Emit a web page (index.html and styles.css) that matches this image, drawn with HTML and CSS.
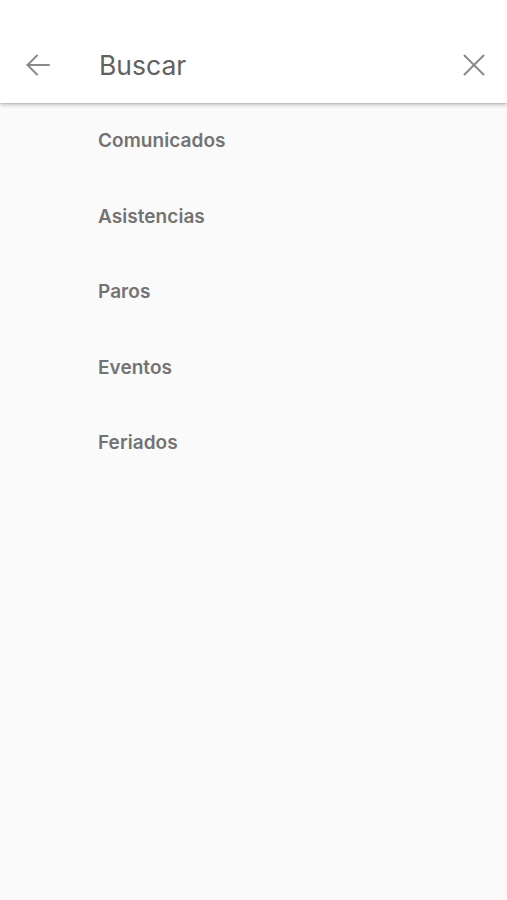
FILE: index.html
```html
<!DOCTYPE html>
<html lang="es">
<head>
<meta charset="utf-8">
<link rel="stylesheet" href="styles.css">
</head>
<body>
<header class="bar">
  <button class="icon-btn back" aria-label="Atrás">
    <svg width="26" height="24" viewBox="0 0 26 24" fill="none" stroke="#8a8a8a" stroke-width="2" stroke-linecap="round" stroke-linejoin="round">
      <path d="M24 12H2.5"/>
      <path d="M12 2.5L2.5 12L12 21.5"/>
    </svg>
  </button>
  <div class="title">Buscar</div>
  <button class="icon-btn close" aria-label="Cerrar">
    <svg width="22" height="22" viewBox="0 0 22 22" fill="none" stroke="#8a8a8a" stroke-width="2" stroke-linecap="round">
      <path d="M1.5 1.5L20.5 20.5"/>
      <path d="M20.5 1.5L1.5 20.5"/>
    </svg>
  </button>
</header>
<ul class="list">
  <li class="item">Comunicados</li>
  <li class="item">Asistencias</li>
  <li class="item">Paros</li>
  <li class="item">Eventos</li>
  <li class="item">Feriados</li>
</ul>
</body>
</html>
```
FILE: styles.css
```css
html, body {
  margin: 0;
  padding: 0;
  height: 100%;
  background: #fafafa;
  font-family: Inter, Roboto, "Liberation Sans", sans-serif;
}
.bar {
  height: 103px;
  background: #ffffff;
  display: flex;
  align-items: center;
  padding-top: 27px;
  box-sizing: border-box;
  box-shadow: 0 2px 4px rgba(0,0,0,0.22), 0 1px 1px rgba(0,0,0,0.08);
  position: relative;
  z-index: 1;
}
.icon-btn {
  background: none;
  border: 0;
  padding: 0;
  display: flex;
  align-items: center;
  justify-content: center;
}
.back {
  margin-left: 25px;
  width: 26px;
}
.title {
  margin-left: 48px;
  font-size: 26.5px;
  color: #616161;
  flex: 1;
}
.close {
  margin-right: 22px;
  width: 22px;
}
.list {
  list-style: none;
  margin: 0;
  padding: 28px 0 0 98px;
}
.item {
  height: 75.5px;
  font-size: 19px;
  font-weight: 600;
  color: #737373;
  line-height: 20px;
  letter-spacing: 0.05px;
}
```
